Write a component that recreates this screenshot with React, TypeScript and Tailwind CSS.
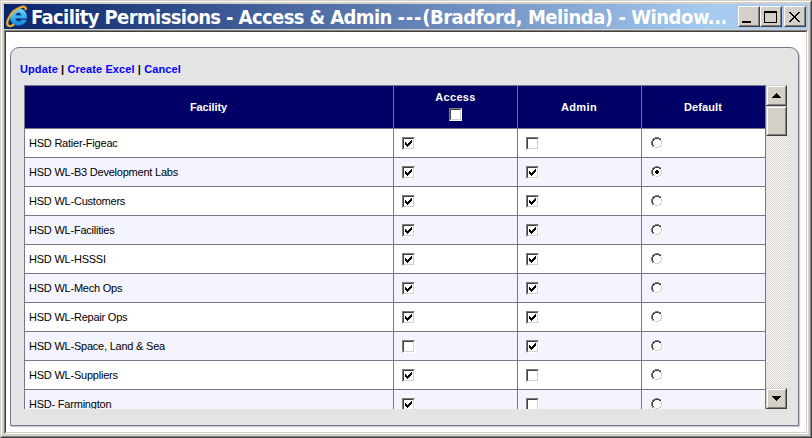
import React from "react";

type Row = { name: string; access: boolean; admin: boolean; selected?: boolean };

const rows: Row[] = [
  { name: "HSD Ratier-Figeac", access: true, admin: false },
  { name: "HSD WL-B3 Development Labs", access: true, admin: true, selected: true },
  { name: "HSD WL-Customers", access: true, admin: true },
  { name: "HSD WL-Facilities", access: true, admin: true },
  { name: "HSD WL-HSSSI", access: true, admin: true },
  { name: "HSD WL-Mech Ops", access: true, admin: true },
  { name: "HSD WL-Repair Ops", access: true, admin: true },
  { name: "HSD WL-Space, Land & Sea", access: false, admin: true },
  { name: "HSD WL-Suppliers", access: true, admin: false },
  { name: "HSD- Farmington", access: true, admin: false },
];

const COLS = "grid grid-cols-[369px_124px_124px_124px] w-[741px]";

function Check({ on = false }: { on?: boolean }) {
  return (
    <span className="block size-[13px] shrink-0 border border-t-[#808080] border-l-[#808080] border-r-white border-b-white">
      <span className="block size-[11px] border border-t-[#404040] border-l-[#404040] border-r-[#d4d0c8] border-b-[#d4d0c8] bg-white">
        {on && (
          <svg className="block size-[9px]" viewBox="0 0 9 9" shapeRendering="crispEdges">
            <path d="M1 3h1v3h-1zM2 4h1v3h-1zM3 5h1v3h-1zM4 4h1v3h-1zM5 3h1v3h-1zM6 2h1v3h-1zM7 1h1v3h-1z" fill="#000" />
          </svg>
        )}
      </span>
    </span>
  );
}

function Radio({ on = false }: { on?: boolean }) {
  return (
    <svg className="block size-3 shrink-0" viewBox="0 0 12 12" shapeRendering="crispEdges">
      <path d="M4 1h4v1h2v2h1v4h-1v2h-2v1h-4v-1h-2v-2h-1v-4h1v-2h2z" fill="#fff" />
      <path d="M4 0h4v1h-4zM2 1h2v1h-2zM8 1h2v1h-2zM1 2h1v2h-1zM0 4h1v4h-1zM1 8h1v2h-1z" fill="#808080" />
      <path d="M4 1h4v1h-4zM2 2h2v1h-2zM8 2h2v1h-2zM2 3h1v1h-1zM1 4h1v4h-1zM2 8h1v1h-1z" fill="#404040" />
      <path d="M9 3h1v1h-1zM10 4h1v4h-1zM9 8h1v1h-1zM8 9h2v1h-2zM2 9h2v1h-2zM4 10h4v1h-4z" fill="#d4d0c8" />
      <path d="M10 2h1v2h-1zM11 4h1v4h-1zM10 8h1v2h-1zM8 10h2v1h-2zM4 11h4v1h-4zM2 10h2v1h-2z" fill="#fff" />
      {on && <path d="M5 4h2v1h1v2h-1v1h-2v-1h-1v-2h1z" fill="#000" />}
    </svg>
  );
}

function Raised({ className, children }: { className: string; children?: React.ReactNode }) {
  return (
    <span className={"block shrink-0 border border-t-[#d4d0c8] border-l-[#d4d0c8] border-r-[#404040] border-b-[#404040] " + className}>
      <span className="flex size-full items-center justify-center border border-t-white border-l-white border-r-[#808080] border-b-[#808080] bg-[#d4d0c8]">
        {children}
      </span>
    </span>
  );
}

function TitleButton({ children }: { children: React.ReactNode }) {
  return (
    <span className="block h-[21px] w-[22px] shrink-0 border border-t-white border-l-white border-r-[#404040] border-b-[#404040]">
      <span className="block size-full border border-t-[#d4d0c8] border-l-[#d4d0c8] border-r-[#808080] border-b-[#808080] bg-[#d4d0c8]">
        <svg className="block h-[17px] w-[18px]" viewBox="0 0 18 17" shapeRendering="crispEdges">
          {children}
        </svg>
      </span>
    </span>
  );
}

function BrowserLogo() {
  return (
    <svg className="block h-[23px] w-[22px] shrink-0" viewBox="0 0 22 23">
      <defs>
        <linearGradient id="blue" x1="0" y1="0" x2="0" y2="1">
          <stop offset="0" stopColor="#7ad8ff" />
          <stop offset=".5" stopColor="#38b2f4" />
          <stop offset="1" stopColor="#1688dc" />
        </linearGradient>
      </defs>
      <path d="M12.500 3.500C7 3.500 4 7.300 4 12.100c0 4.900 3.500 8.300 8.500 8.300 4.200 0 7.100-2 8.100-5.600h-5.300c-.5 1-1.300 1.500-2.600 1.500-1.900 0-3-.9-3.100-2.700h11.300C21.300 7.300 18.200 3.500 12.500 3.500zM9.700 10.200c.3-1.500 1.300-2.400 2.800-2.400s2.500.9 2.700 2.400z" fill="url(#blue)" stroke="#1767b5" strokeWidth=".5" fillRule="evenodd" />
      <path d="M19.500 5.200C20.300 2.700 19 1.200 16 1.900 10.500 3.200 4.400 8.700 2.200 14.200c-2 4.900-.9 7.700 2.700 6.800 1.200-.3 2.200-.9 3.300-1.700" fill="none" stroke="#e9a92d" strokeWidth="2.300" />
    </svg>
  );
}

export default function App() {
  return (
    <div className="h-[438px] w-[812px] overflow-hidden border border-t-[#d4d0c8] border-l-[#d4d0c8] border-r-[#404040] border-b-[#404040] font-['Liberation_Sans',Arial,sans-serif] text-[11px] text-black">
      <div className="flex h-[436px] w-[810px] flex-col border border-t-white border-l-white border-r-[#808080] border-b-[#808080] bg-[#d4d0c8] p-[2px]">
        <header className="flex h-[25px] shrink-0 items-start bg-[linear-gradient(90deg,#0a246a_0%,#a6caf0_88%)] pt-[2px] pl-[2px]">
          <span className="-mt-[1px]"><BrowserLogo /></span>
          <h1 className="-mt-[1px] h-6 w-[710px] shrink-0 pl-[3px] font-['DejaVu_Sans_Condensed','DejaVu_Sans',sans-serif] text-[20px] leading-[24px] font-bold tracking-[-0.47px] whitespace-nowrap text-white">
            <span className="tracking-[-0.61px]">Facility Permissions - Access &amp; Admin </span>
            <span className="tracking-[0.8px]">---</span>
            (Bradford, Melinda) - Window...
          </h1>
          <TitleButton>
            <path d="M2 13h9v2h-9z" />
          </TitleButton>
          <TitleButton>
            <path fillRule="evenodd" d="M2 3h13v12h-13zM3 5v9h11v-9z" />
          </TitleButton>
          <span className="ml-[2px]">
            <TitleButton>
              {[0, 1, 2, 3, 4, 5, 6, 7, 8, 9].map((i) => (
                <g key={i}>
                  <rect x={3 + i} y={4 + i} width="2" height="1" />
                  <rect x={12 - i} y={4 + i} width="2" height="1" />
                </g>
              ))}
            </TitleButton>
          </span>
        </header>

        <div className="mt-px h-[404px] w-[804px] border border-t-[#808080] border-l-[#808080] border-r-white border-b-white">
          <div className="h-[402px] w-[802px] border border-t-[#404040] border-l-[#404040] border-r-[#d4d0c8] border-b-[#d4d0c8] bg-white pt-[15px] pl-1">
            <section className="h-[379px] w-[789px] rounded-t-[9px] border border-[#77778b] bg-[#e4e4e4] pl-[9px] shadow-[1px_1px_1px_#c4c4cc]">
              <nav className="h-[37px] pt-[14px] leading-[15px] font-bold tracking-[0.1px] whitespace-nowrap">
                <a className="text-[#0000ff]">Update</a> | <a className="text-[#0000ff]">Create Excel</a> | <a className="text-[#0000ff]">Cancel</a>
              </nav>
              <div className="ml-1 flex h-[324px] w-[763px] overflow-hidden">
                <div className="w-[742px] shrink-0 border-t border-l border-[#77778b]">
                  <div className={COLS + " h-[43px] bg-[#000066] font-bold text-white"}>
                    <div className="flex items-center justify-center border-r border-b border-[#77778b] pr-px tracking-[-0.1px]">Facility</div>
                    <div className="flex flex-col items-center border-r border-b border-[#77778b] pt-[4px] leading-[14px]">
                      <span className="mb-1 tracking-[0.3px]">Access</span>
                      <Check />
                    </div>
                    <div className="flex items-center justify-center border-r border-b border-[#77778b] pr-px tracking-[0.4px]">Admin</div>
                    <div className="flex items-center justify-center border-r border-b border-[#77778b] pr-px tracking-[0.1px]">Default</div>
                  </div>
                  {rows.map((r, i) => (
                    <div key={r.name} className={COLS + " h-[29px] " + (i % 2 ? "bg-[#f4f4ff]" : "bg-white")}>
                      <div className="flex items-center border-r border-b border-[#77778b] pl-1 tracking-[-0.22px]">{r.name}</div>
                      <div className="border-r border-b border-[#77778b] pt-2 pl-2"><Check on={r.access} /></div>
                      <div className="border-r border-b border-[#77778b] pt-2 pl-2"><Check on={r.admin} /></div>
                      <div className="border-r border-b border-[#77778b] pt-2 pl-[9px]"><Radio on={r.selected} /></div>
                    </div>
                  ))}
                </div>
                <div className="flex w-[21px] shrink-0 flex-col justify-between bg-[repeating-conic-gradient(#d4d0c8_0_25%,#fff_0_50%)] bg-[length:2px_2px]">
                  <div>
                    <Raised className="h-[21px] w-[21px]">
                      <svg className="block h-[5px] w-[9px]" viewBox="0 0 9 5" shapeRendering="crispEdges">
                        <path d="M4 0h1v1h1v1h1v1h1v1h1v1h-9v-1h1v-1h1v-1h1v-1h1z" />
                      </svg>
                    </Raised>
                    <Raised className="h-[30px] w-[21px]" />
                  </div>
                  <Raised className="h-[21px] w-[21px]">
                    <svg className="block h-[5px] w-[9px]" viewBox="0 0 9 5" shapeRendering="crispEdges">
                      <path d="M0 0h9v1h-1v1h-1v1h-1v1h-1v1h-1v-1h-1v-1h-1v-1h-1v-1h-1z" />
                    </svg>
                  </Raised>
                </div>
              </div>
            </section>
          </div>
        </div>
      </div>
    </div>
  );
}
